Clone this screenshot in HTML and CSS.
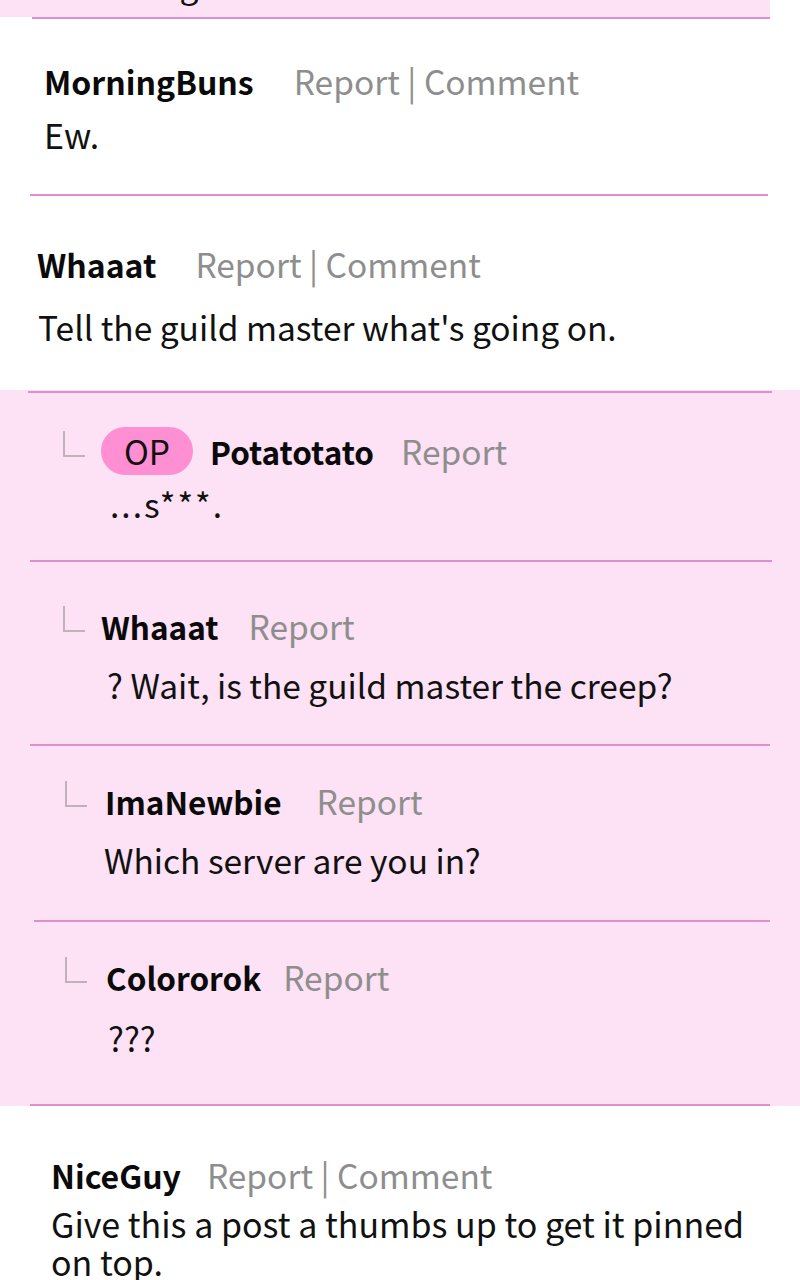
FILE: index.html
```html
<!DOCTYPE html>
<html>
<head>
<meta charset="utf-8">
<link rel="stylesheet" href="styles.css">
</head>
<body>
<div class="page">
  <div class="prev">
    <p class="prev-text">thought...</p>
  </div>
  <div class="rule r-top"></div>

  <div class="comment c-morning">
    <div class="head"><span class="name">MorningBuns</span><span class="actions">Report | Comment</span></div>
    <p class="body">Ew.</p>
  </div>
  <div class="rule r-morning"></div>

  <div class="comment c-whaaat">
    <div class="head"><span class="name">Whaaat</span><span class="actions">Report | Comment</span></div>
    <p class="body">Tell the guild master what's going on.</p>
  </div>

  <div class="replies">
    <div class="rule r-1"></div>
    <div class="reply rp-1">
      <div class="head"><span class="corner"></span><span class="op">OP</span><span class="name">Potatotato</span><span class="actions">Report</span></div>
      <p class="body">...s***.</p>
    </div>
    <div class="rule r-2"></div>
    <div class="reply rp-2">
      <div class="head"><span class="corner"></span><span class="name">Whaaat</span><span class="actions">Report</span></div>
      <p class="body">? Wait, is the guild master the creep?</p>
    </div>
    <div class="rule r-3"></div>
    <div class="reply rp-3">
      <div class="head"><span class="corner"></span><span class="name">ImaNewbie</span><span class="actions">Report</span></div>
      <p class="body">Which server are you in?</p>
    </div>
    <div class="rule r-4"></div>
    <div class="reply rp-4">
      <div class="head"><span class="corner"></span><span class="name">Colororok</span><span class="actions">Report</span></div>
      <p class="body">???</p>
    </div>
    <div class="rule r-5"></div>
  </div>

  <div class="comment c-nice">
    <div class="head"><span class="name">NiceGuy</span><span class="actions">Report | Comment</span></div>
    <p class="body">Give this a post a thumbs up to get it pinned on top.</p>
  </div>
</div>
</body>
</html>
```

FILE: styles.css
```css
html, body {
  margin: 0;
  padding: 0;
  background: #ffffff;
}
body {
  font-family: "Noto Sans CJK KR", "Noto Sans", sans-serif;
  color: #111111;
  width: 800px;
  height: 1280px;
  overflow: hidden;
}
p { margin: 0; }

.page {
  display: flex;
  flex-direction: column;
}

.prev {
  background: #fde1f4;
  width: 770px;
  height: 17px;
  overflow: hidden;
}
.prev-text {
  font-size: 33.5px;
  line-height: 40px;
  margin-top: -36px;
  padding-left: 106px;
}

.rule {
  height: 2px;
  background: #e08ecd;
}
.r-top { margin: 0 30px 0 32px; }
.r-morning { margin: 0 32px 0 30px; }
.r-1 { margin: 1px 28px 0 28px; }
.r-2 { margin: 0 28px 0 30px; }
.r-3 { margin: 0 30px 0 30px; }
.r-4 { margin: 0 30px 0 34px; }
.r-5 { margin: 0 30px 0 30px; }

.head {
  display: flex;
  align-items: center;
  font-size: 33.5px;
  line-height: 44px;
  height: 44px;
}
.name {
  font-weight: 700;
  font-size: 32px;
  color: #0a0a0a;
}
.actions {
  color: #8e8e8e;
}
.body {
  font-size: 33.5px;
  line-height: 38px;
}

.c-morning {
  height: 175px;
  box-sizing: border-box;
  padding: 40px 0 0 44px;
}
.c-morning .actions { margin-left: 40px; }
.c-morning .body { margin-top: 13px; font-size: 34px; }

.c-whaaat {
  height: 194px;
  box-sizing: border-box;
  padding: 46px 0 0 37px;
}
.c-whaaat .actions { margin-left: 39px; }
.c-whaaat .body { margin-top: 22px; padding-left: 1px; }

.replies {
  background: #fde1f4;
  display: flex;
  flex-direction: column;
}

.reply {
  box-sizing: border-box;
}
.reply .name { font-size: 31.5px; }
.corner {
  width: 22px;
  height: 26px;
  border-left: 2px solid #8d8d8d;
  border-bottom: 2px solid #8d8d8d;
  box-sizing: border-box;
  align-self: flex-start;
  margin-top: 2px;
  opacity: 0.55;
}
.op {
  background: #fd8fd2;
  color: #111;
  border-radius: 24px;
  width: 92px;
  height: 48px;
  line-height: 48px;
  text-align: center;
  margin-left: 16px;
  margin-right: 17px;
}

.rp-1 { height: 167px; padding: 36px 0 0 63px; }
.rp-1 .actions { margin-left: 27px; }
.rp-1 .body { padding-left: 47px; margin-top: 12px; letter-spacing: 2px; }

.rp-2 { height: 182px; padding: 42px 0 0 63px; }
.rp-2 .name { margin-left: 16px; }
.rp-2 .actions { margin-left: 30px; }
.rp-2 .body { padding-left: 44px; margin-top: 18px; }

.rp-3 { height: 174px; padding: 33px 0 0 65px; }
.rp-3 .name { margin-left: 18px; }
.rp-3 .actions { margin-left: 35px; }
.rp-3 .body { padding-left: 39px; margin-top: 18px; }

.rp-4 { height: 182px; padding: 33px 0 0 65px; }
.rp-4 .name { margin-left: 19px; }
.rp-4 .actions { margin-left: 22px; }
.rp-4 .body { padding-left: 43px; margin-top: 20px; }

.c-nice {
  padding: 47px 0 0 51px;
}
.c-nice .actions { margin-left: 26px; }
.c-nice .body { margin-top: 8px; font-size: 34px; max-width: 700px; }
```
